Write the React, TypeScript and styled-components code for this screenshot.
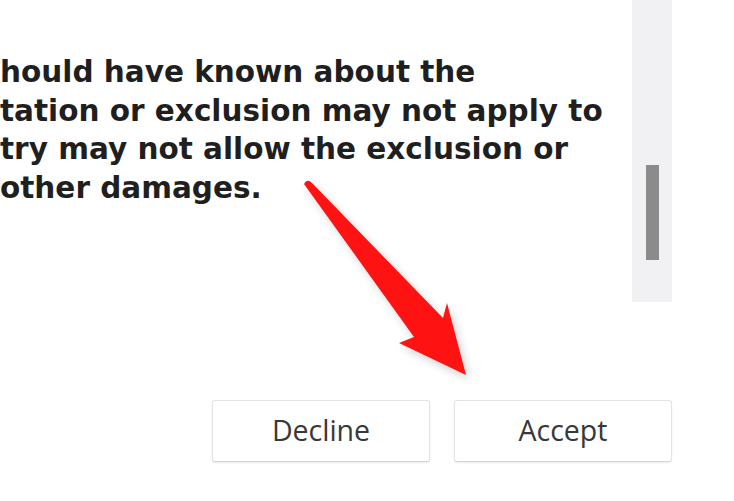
import React from 'react';
import styled, { createGlobalStyle } from 'styled-components';

const Global = createGlobalStyle`
  html, body { margin: 0; padding: 0; background: #ffffff; }
  #root { width: 734px; height: 501px; overflow: hidden; }
`;

const Page = styled.div`
  position: relative;
  width: 734px;
  height: 501px;
  background: #fff;
  display: flex;
  flex-direction: column;
  overflow: hidden;
`;

const Body = styled.div`
  display: flex;
  height: 302px;
`;

const Terms = styled.div`
  flex: 1;
  padding-top: 53px;
  overflow: hidden;
  font-family: 'DejaVu Sans', Verdana, sans-serif;
  font-weight: 700;
  font-size: 29.5px;
  line-height: 38.5px;
  color: #1f1f1f;
`;

const Line = styled.div`
  white-space: nowrap;
`;

const Track = styled.div`
  width: 40px;
  margin-right: 62px;
  background: #f1f0f2;
  display: flex;
  justify-content: center;
  padding-top: 165px;
`;

const Thumb = styled.div`
  width: 13px;
  height: 95px;
  background: #8b8b8b;
`;

const Actions = styled.div`
  display: flex;
  justify-content: flex-end;
  gap: 24px;
  padding: 98px 62px 0 0;
`;

const Button = styled.button`
  width: 218px;
  height: 62px;
  background: #fff;
  border: 1px solid #e3e3e3;
  border-bottom-color: #d4d4d4;
  border-radius: 3px;
  box-shadow: 0 1px 2px rgba(0, 0, 0, 0.08);
  font-family: 'Open Sans', 'Noto Sans', sans-serif;
  font-size: 28.5px;
  color: #383838;
  padding: 0 0 3px;
`;

const Arrow = styled.svg`
  position: absolute;
  left: 0;
  top: 0;
  width: 734px;
  height: 501px;
  pointer-events: none;
  filter: drop-shadow(3px 4px 4px rgba(0, 0, 0, 0.18));
`;

export default function App() {
  return (
    <Page>
      <Global />
      <Body>
        <Terms>
          <Line>hould have known about the</Line>
          <Line>tation or exclusion may not apply to</Line>
          <Line>try may not allow the exclusion or</Line>
          <Line>other damages.</Line>
        </Terms>
        <Track>
          <Thumb />
        </Track>
      </Body>
      <Actions>
        <Button>Decline</Button>
        <Button>Accept</Button>
      </Actions>
      <Arrow viewBox="0 0 734 501">
        <path
          d="M304 184 Q307 178 312 183 L443 318 L447 303 L466 375 L399 343 L414 337 Z"
          fill="#ff1212"
        />
      </Arrow>
    </Page>
  );
}
